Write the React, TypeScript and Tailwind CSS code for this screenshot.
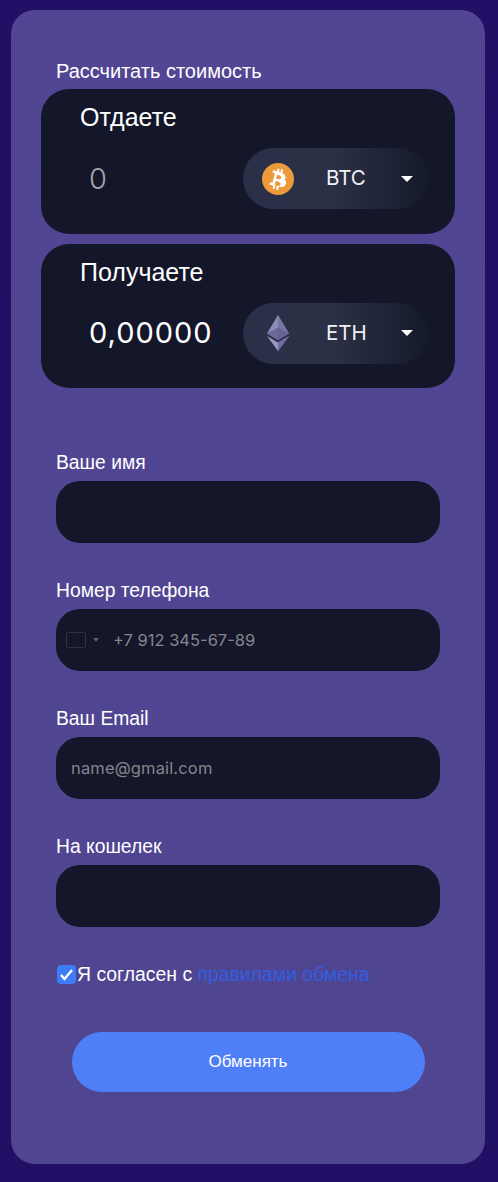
import { useState } from 'react'

const labelFont = "font-['Liberation_Sans',sans-serif]"
const valueFont = "font-['Inter',sans-serif]"

function BtcIcon() {
  return (
    <svg width="32" height="32" viewBox="0 0 32 32">
      <circle cx="16" cy="16" r="16" fill="#eb9a3c" />
      <g transform="rotate(14 16 16) translate(-3.2 -3.2) scale(1.2)">
        <path
          fill="#fff"
          d="M21.6 13.9c.3-2-1.2-3-3.3-3.7V7.5h-1.7v2.5h-1.3V7.5h-1.7V10h-3.4v1.8h1.2c.6 0 .9.3.9.8v6.8c0 .4-.2.7-.7.7h-1.2l-.3 2h3.4v2.7h1.7v-2.7h1.3v2.7h1.7v-2.7c2.9-.2 4.9-1 5.1-3.7.2-2.1-.8-3.1-2.4-3.5 1-.5 1.6-1.3 1.7-2.8zm-2.5 6c0 2.1-3.5 1.9-4.6 1.9v-3.8c1.1 0 4.6-.3 4.6 1.9zm-.8-5.4c0 1.9-2.9 1.7-3.8 1.7v-3.4c.9 0 3.8-.3 3.8 1.7z"
        />
      </g>
    </svg>
  )
}

function EthIcon() {
  return (
    <svg width="24" height="36" viewBox="0 0 24 36">
      <path fill="#8d8bb8" d="M12 0 1 18.5 12 25l11-6.5z" />
      <path fill="#6c6a9c" d="M12 12.5 1 18.5 12 25l11-6.5z" />
      <path fill="#5d5b8c" d="M12 0v25l11-6.5z" opacity="0.45" />
      <path fill="#9b99c4" d="M1 21 12 27.5 23 21 12 36z" />
      <path fill="#6f6da0" d="M12 27.5 23 21 12 36z" />
    </svg>
  )
}

function CurrencyPill({ icon, code }: { icon: React.ReactNode; code: string }) {
  return (
    <div className="flex h-[61px] w-[185px] shrink-0 items-center rounded-full bg-gradient-to-r from-[#2a3048] via-[#2c3046] to-[#14192b] pl-[19px] pr-[15px]">
      <div className="flex w-8 items-center justify-center">{icon}</div>
      <span className={`${valueFont} ml-[32px] text-[20.5px] text-[#f2f2f5]`}>{code}</span>
      <span className="ml-auto h-0 w-0 border-x-[6px] border-t-[6px] border-x-transparent border-t-white" />
    </div>
  )
}

function ExchangeBox(props: {
  title: string
  value: string
  dim?: boolean
  icon: React.ReactNode
  code: string
}) {
  return (
    <div className="h-[144.5px] rounded-[28px] bg-[#131729] pl-[39px] pr-[27px] pt-[13px]">
      <div className={`${labelFont} text-[25px] leading-[30px] text-white`}>{props.title}</div>
      <div className="mt-[16px] flex items-center justify-between">
        <span
          className={`${valueFont} ml-[9px] text-[29px] tracking-[1px] ${props.dim ? 'font-light text-[#a3a4a9]' : 'text-white'}`}
        >
          {props.value}
        </span>
        <CurrencyPill icon={props.icon} code={props.code} />
      </div>
    </div>
  )
}

function Field({ label, children }: { label: string; children?: React.ReactNode }) {
  return (
    <div>
      <div className={`${labelFont} text-[19.3px] leading-[22px] text-white`}>{label}</div>
      <div className="mt-[7px] flex h-[62px] items-center rounded-[24px] bg-[#131729] px-[10px]">
        {children}
      </div>
    </div>
  )
}

export default function App() {
  const [agree, setAgree] = useState(true)

  return (
    <div className="h-[1182px] bg-[#211065] pb-[18px] pl-[11px] pr-[13px] pt-[10px]">
      <div className="flex h-full flex-col rounded-[24px] bg-gradient-to-b from-[#524694] to-[#4f4590] px-[30px] pt-[50px]">
        <div className={`${labelFont} pl-[15px] text-[20px] leading-[22px] text-white`}>
          Рассчитать стоимость
        </div>
        <div className="mt-[7px] flex flex-col gap-[10px]">
          <ExchangeBox title="Отдаете" value="0" dim icon={<BtcIcon />} code="BTC" />
          <ExchangeBox title="Получаете" value="0,00000" icon={<EthIcon />} code="ETH" />
        </div>

        {/* Form */}
        <div className="mt-[64px] flex flex-col gap-[37px] px-[15px]">
          <Field label="Ваше имя" />
          <Field label="Номер телефона">
            <span className="h-[16px] w-[20px] rounded-[2px] border border-[#2e3244]" />
            <span className="ml-[7px] h-0 w-0 border-x-[3.5px] border-t-[4px] border-x-transparent border-t-[#5b5e6b]" />
            <span className={`${valueFont} ml-[14px] text-[16.5px] text-[#85868d]`}>+7 912 345-67-89</span>
          </Field>
          <Field label="Ваш Email">
            <span className={`${valueFont} ml-[5px] text-[16.5px] tracking-[0.15px] text-[#85868d]`}>name@gmail.com</span>
          </Field>
          <Field label="На кошелек" />
        </div>

        <label className={`${labelFont} ml-[16px] mt-[33px] flex items-center text-[19.4px] text-white`}>
          <input
            type="checkbox"
            checked={agree}
            onChange={(e) => setAgree(e.target.checked)}
            className="peer sr-only"
          />
          <span className="flex h-[19px] w-[19px] items-center justify-center rounded-[4px] bg-[#3f7bf5]">
            <svg width="15" height="13" viewBox="0 0 15 13" fill="none">
              <path d="M2 7l3.5 4L13 2" stroke="#fff" strokeWidth="2.4" />
            </svg>
          </span>
          <span className="ml-px">
            Я согласен с <a className="text-[#2f5fe0]">правилами обмена</a>
          </span>
        </label>

        <button className={`${labelFont} mx-auto mt-[43px] h-[60px] w-[353px] rounded-full bg-[#4f7ff7] text-[17px] text-white`}>
          Обменять
        </button>
      </div>
    </div>
  )
}
